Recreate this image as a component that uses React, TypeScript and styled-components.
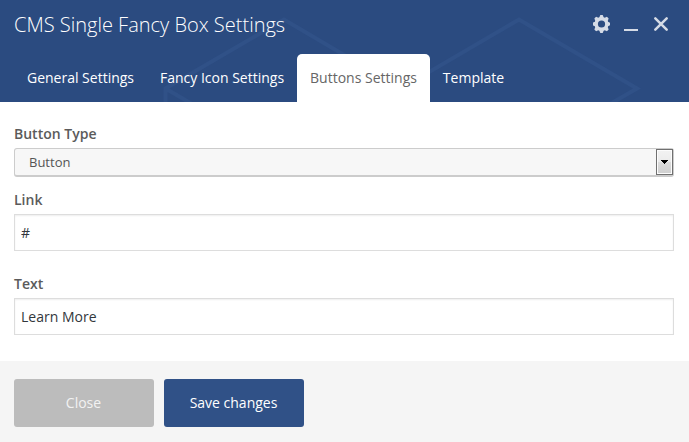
import React, { useState } from "react";
import styled, { createGlobalStyle } from "styled-components";

const GlobalStyle = createGlobalStyle`
  *, *::before, *::after { box-sizing: border-box; }
  body {
    margin: 0;
    background: #fff;
    font: 14px/20px "Open Sans", sans-serif;
    overflow: hidden;
  }
  button, input { font: inherit; }
`;

const Panel = styled.section`
  display: flex;
  flex-direction: column;
  width: 689px;
  height: 442px;
  background: #fff;
`;

const Header = styled.header`
  position: relative;
  display: flex;
  flex-direction: column;
  justify-content: space-between;
  height: 102px;
  flex: none;
  background: #2b4b80;
`;

const Pattern = styled.svg`
  position: absolute;
  inset: 0;
  pointer-events: none;
`;

const TitleBar = styled.div`
  position: relative;
  display: flex;
  align-items: center;
  justify-content: space-between;
  height: 49px;
  padding: 0 19px 0 14px;
`;

const Title = styled.h2`
  margin: 0;
  font-size: 20px;
  line-height: 28px;
  font-weight: 300;
  color: #fff;
`;

const Controls = styled.div`
  display: flex;
  align-items: center;
  gap: 12px;
  height: 18px;
  margin-bottom: 1px;
`;

const IconButton = styled.button`
  display: flex;
  padding: 0;
  border: 0;
  background: none;
  color: #d5dbe6;
`;

const Tabs = styled.nav`
  position: relative;
  display: flex;
  height: 48px;
  padding-left: 14px;
`;

const Tab = styled.button<{ $active: boolean; $width: number }>`
  width: ${(p) => p.$width}px;
  padding: 0;
  border: 0;
  border-radius: 5px 5px 0 0;
  background: ${(p) => (p.$active ? "#fff" : "transparent")};
  color: ${(p) => (p.$active ? "#666" : "#fff")};
  white-space: nowrap;
`;

const Form = styled.div`
  display: flex;
  flex: none;
  flex-direction: column;
  height: 259px;
  padding: 22px 15px 0 14px;
`;

const Label = styled.label`
  height: 20px;
  margin-bottom: 4px;
  font-weight: 600;
  color: #5b5b5b;
`;

const Select = styled.div`
  display: flex;
  align-items: stretch;
  justify-content: space-between;
  height: 29px;
  margin-bottom: 13px;
  padding-left: 14px;
  border: 1px solid #ccc;
  border-bottom-width: 2px;
  border-radius: 3px;
  background: #f7f7f7;
  color: #555;
  font-size: 13px;
  line-height: 26px;
`;

const Arrow = styled.span`
  display: flex;
  align-items: center;
  justify-content: center;
  width: 17px;
  border: 1px solid #707070;
  box-shadow: inset 0 0 0 1px #fcfcfc;
  background: linear-gradient(#f2f2f2 0, #ebebeb 50%, #dddddd 50%, #cfcfcf);
`;

const Input = styled.input<{ $gap: number }>`
  height: 37px;
  margin: 0 0 ${(p) => p.$gap}px;
  padding: 0 6px;
  border: 1px solid #ddd;
  border-radius: 0;
  outline: 0;
  background: #fff;
  box-shadow: inset 0 1px 2px rgba(0, 0, 0, 0.07);
  color: #32373c;
`;

const Footer = styled.footer`
  display: flex;
  flex: 1;
  gap: 10px;
  padding: 18px 14px 0;
  background: #f5f5f5;
`;

const Action = styled.button<{ $primary?: boolean }>`
  width: 140px;
  height: 48px;
  padding: 0 1px 0 0;
  border: 0;
  border-radius: 3px;
  background: ${(p) => (p.$primary ? "#305187" : "#bcbcbc")};
  color: ${(p) => (p.$primary ? "#fff" : "#f2f2f2")};
`;

const TABS = [
  { name: "General Settings", width: 133 },
  { name: "Fancy Icon Settings", width: 150 },
  { name: "Buttons Settings", width: 133 },
  { name: "Template", width: 87 },
];

export default function App() {
  const [active, setActive] = useState("Buttons Settings");
  const [link, setLink] = useState("#");
  const [text, setText] = useState("Learn More");

  return (
    <>
      <GlobalStyle />
      <Panel>
        <Header>
          <Pattern width="689" height="102" viewBox="0 0 689 102" fill="none">
            <path
              d="M165.500 104V88.500L284 19.500L401 88.500L519 19.500L637 88.500L610 104M165.500 88.500L192 104"
              stroke="#305187"
              strokeWidth="4"
            />
          </Pattern>
          <TitleBar>
            <Title>CMS Single Fancy Box Settings</Title>
            <Controls>
              <IconButton aria-label="Settings">
                <svg width="18" height="18" viewBox="-9.5 -9 18 18">
                  <mask id="hub" maskUnits="userSpaceOnUse" x="-9" y="-9" width="18" height="18">
                    <rect x="-9" y="-9" width="18" height="18" fill="#fff" />
                    <circle r="3.600" fill="#000" />
                  </mask>
                  <g fill="currentColor" mask="url(#hub)">
                    <circle r="7" />
                    {[0, 45, 90, 135].map((angle) => (
                      <path
                        key={angle}
                        d="M-2.400 -6L-1.200 -8.900H1.200L2.400 -6V6L1.200 8.900H-1.200L-2.400 6Z"
                        transform={`rotate(${angle})`}
                      />
                    ))}
                  </g>
                </svg>
              </IconButton>
              <IconButton aria-label="Minimize">
                <svg width="18" height="18" viewBox="0 0 18 18">
                  <rect x="2" y="14" width="14" height="2" fill="currentColor" />
                </svg>
              </IconButton>
              <IconButton aria-label="Close panel">
                <svg width="18" height="18" viewBox="0 0 18 18">
                  <path
                    d="M3.300 3.300L14.700 14.700M14.700 3.300L3.300 14.700"
                    stroke="currentColor"
                    strokeWidth="2.500"
                    strokeLinecap="round"
                  />
                </svg>
              </IconButton>
            </Controls>
          </TitleBar>
          <Tabs>
            {TABS.map((t) => (
              <Tab
                key={t.name}
                $active={t.name === active}
                $width={t.width}
                onClick={() => setActive(t.name)}
              >
                {t.name}
              </Tab>
            ))}
          </Tabs>
        </Header>
        <Form>
          <Label>Button Type</Label>
          <Select>
            Button
            <Arrow>
              <svg width="7" height="4" viewBox="0 0 7 4" shapeRendering="crispEdges">
                <path d="M0 0H7V1H6V2H5V3H4V4H3V3H2V2H1V1H0Z" fill="#000" />
              </svg>
            </Arrow>
          </Select>
          <Label htmlFor="link">Link</Label>
          <Input id="link" $gap={23} value={link} onChange={(e) => setLink(e.target.value)} />
          <Label htmlFor="text">Text</Label>
          <Input id="text" $gap={0} value={text} onChange={(e) => setText(e.target.value)} />
        </Form>
        <Footer>
          <Action>Close</Action>
          <Action $primary>Save changes</Action>
        </Footer>
      </Panel>
    </>
  );
}
